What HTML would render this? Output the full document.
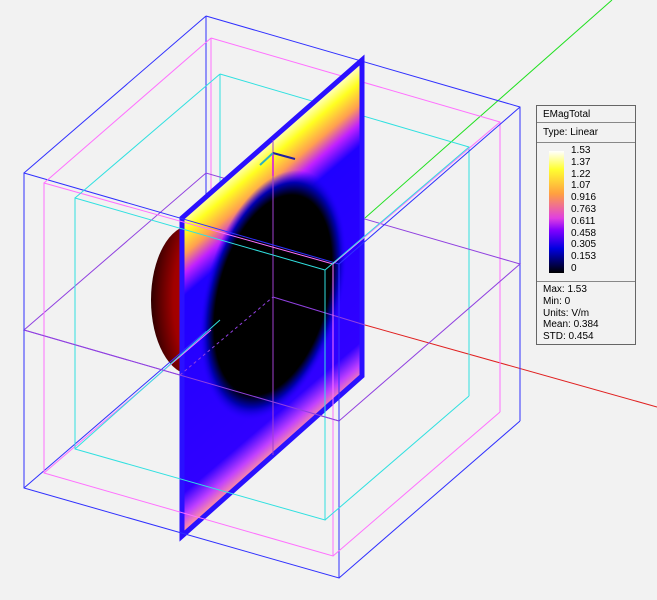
<!DOCTYPE html>
<html><head><style>
body{margin:0;background:#f2f2f2;width:657px;height:600px;overflow:hidden;font-family:"Liberation Sans",sans-serif}
.lg{position:absolute;left:536px;top:105px;width:100px;height:240px;border:1px solid #666;background:#f2f2f2;font-size:10px;color:#000;box-sizing:border-box}
.lg div{position:absolute;left:0;box-sizing:border-box}
</style></head><body>
<svg width="657" height="600" style="position:absolute;left:0;top:0">
<defs>
<linearGradient id="pl" gradientUnits="userSpaceOnUse" x1="272" y1="138" x2="429" y2="322">
<stop offset="0" stop-color="#ffffd0"/><stop offset="0.06" stop-color="#ffff20"/><stop offset="0.13" stop-color="#ffa050"/><stop offset="0.19" stop-color="#c020ff"/><stop offset="0.26" stop-color="#2000ff"/><stop offset="0.88" stop-color="#3000ff"/><stop offset="0.95" stop-color="#c040ff"/><stop offset="1" stop-color="#ff90a0"/>
</linearGradient>
<radialGradient id="el" cx="0.5" cy="0.5" r="0.5">
<stop offset="0.8" stop-color="#000"/><stop offset="0.9" stop-color="#0000b0"/><stop offset="1" stop-color="#2000ff" stop-opacity="0"/>
</radialGradient>
<radialGradient id="sp" cx="0.9" cy="0.5" r="0.9">
<stop offset="0" stop-color="#e00000"/><stop offset="0.7" stop-color="#a00000"/><stop offset="1" stop-color="#300000"/>
</radialGradient>
</defs>
<g fill="none" stroke-width="1">
<line x1="365" y1="218" x2="612" y2="0" stroke="#20e020"/>
<line x1="365" y1="325" x2="657" y2="407" stroke="#e02020"/>
<path d="M206 16 L520 107 L520 421 M206 16 L206 331" stroke="#3030ff"/>
<path d="M211 38 L500 122 L500 412 M211 38 L211 330" stroke="#ff70ff"/>
<path d="M220 74 L469 147 L469 396 M220 74 L220 320" stroke="#30e0e0"/>
<path d="M24 330 L206 173 L520 264 L339 421 Z" stroke="#9040e0"/>
<ellipse cx="192" cy="300" rx="41" ry="75" fill="url(#sp)" stroke="none"/>
<polygon points="180,218 364,59 364,377 180,536" fill="url(#pl)" stroke="none"/>
<ellipse cx="273" cy="295" rx="68" ry="128" transform="rotate(15 273 295)" fill="url(#el)" stroke="none"/>
<path d="M182 218 L362 60 L362 376 L182 536 Z" stroke="#2a10ff" stroke-width="5"/>
<line x1="273" y1="140" x2="273" y2="455" stroke="#a040d0"/>
<line x1="273" y1="297" x2="365" y2="325" stroke="#9040e0"/>
<line x1="180" y1="375" x2="273" y2="297" stroke="#9040e0" stroke-dasharray="3 3"/>
<line x1="273" y1="152" x2="273" y2="176" stroke="#e040c0" stroke-width="2"/>
<line x1="273" y1="153" x2="295" y2="159" stroke="#2020a0" stroke-width="2"/>
<line x1="273" y1="153" x2="260" y2="165" stroke="#30b0c0" stroke-width="2"/>
<path d="M24 173 L339 264 L339 578 L24 488 Z M24 173 L206 16 M339 264 L520 107 M339 578 L520 421 M24 488 L206 331" stroke="#3030ff"/>
<path d="M44 183 L333 264 L333 556 L44 473 Z M44 183 L211 38 M333 264 L500 122 M333 556 L500 412 M44 473 L211 330" stroke="#ff70ff"/>
<path d="M75 198 L325 270 L325 520 L75 449 Z M75 198 L220 74 M325 270 L469 147 M325 520 L469 396 M75 449 L220 320" stroke="#30e0e0"/>
<line x1="24" y1="330" x2="339" y2="421" stroke="#9040e0"/>
</g>
</svg>
<div class="lg">
<div style="top:0;width:98px;height:17px;border-bottom:1px solid #888;line-height:17px;padding-left:6px">EMagTotal</div>
<div style="top:17px;width:98px;height:20px;border-bottom:1px solid #888;line-height:19px;padding-left:6px">Type: Linear</div>
<div style="top:45px;left:12px;width:15px;height:122px;background:linear-gradient(#fff,#ffff30 15%,#ffa040 35%,#e040e0 55%,#8000ff 65%,#0000e0 80%,#000)"></div>
<div style="top:39px;left:34px;line-height:11.8px">1.53<br>1.37<br>1.22<br>1.07<br>0.916<br>0.763<br>0.611<br>0.458<br>0.305<br>0.153<br>0</div>
<div style="top:175px;width:98px;height:0;border-top:1px solid #888"></div>
<div style="top:178px;left:6px;line-height:11.8px">Max: 1.53<br>Min: 0<br>Units: V/m<br>Mean: 0.384<br>STD: 0.454</div>
</div>
</body></html>
